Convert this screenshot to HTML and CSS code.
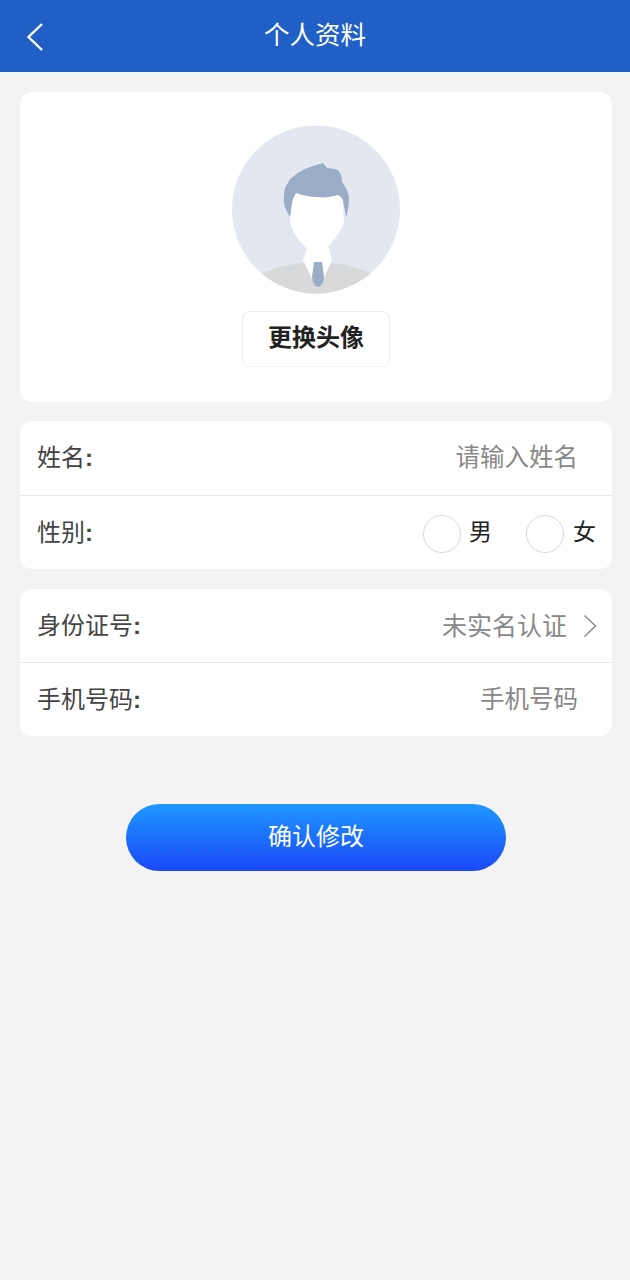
FILE: index.html
```html
<!DOCTYPE html>
<html lang="zh-CN">
<head>
    <meta charset="UTF-8">
    <meta name="viewport" content="width=device-width, initial-scale=1.0">
    <title>个人资料</title>
    <link rel="stylesheet" href="styles.css">
</head>
<body>
    <header class="top-bar">
        <svg class="back-icon" width="18" height="30" viewBox="0 0 18 30">
            <path d="M16 2 L2.5 15 L16 28" fill="none" stroke="#fff" stroke-width="2.4"/>
        </svg>
        <h1>个人资料</h1>
    </header>
    <main>
        <section class="card avatar-card">
            <svg class="avatar" width="168" height="169" viewBox="0 0 168 169">
                <defs>
                    <clipPath id="avatar-clip"><circle cx="84" cy="84.5" r="84"/></clipPath>
                </defs>
                <circle cx="84" cy="84.5" r="84" fill="#e3e8f0"/>
                <g clip-path="url(#avatar-clip)" class="avatar-figure">
                    <ellipse cx="85" cy="175" rx="75" ry="38" fill="#d8d9da"/>
                    <path d="M71 135 L76 120 L96 120 L100 135 L89 160 L83 160 Z" fill="#fff"/>
                    <path d="M82 137 L90 137 L92 152 C92 157 89 162 86 162 C83 162 80 157 80 152 Z" fill="#9badc6"/>
                    <path d="M60 68 L110 68 L112 97 C110 104 105 111 100 117 L93 126 L78 126 L68 117 C63 111 60 104 58 97 Z" fill="#fff"/>
                    <path d="M58 92 C53 84 51 78 52 73 C52 66 53 61 56 58 C57 55 59 53 61 52 C66 47 72 44 78 42 C82 41 87 39 91 38 L95 43 C99 43 103 44 106 45 C109 48 110 52 110 57 C114 62 116 67 117 72 C117 79 116 86 114 92 C113 86 112 80 111 75 C109 72 108 71 106 70 C99 72 92 73 85 72 C77 72 70 70 64 68 C62 71 61 74 60 78 C59 83 59 87 58 92 Z" fill="#9badc6"/>
                </g>
            </svg>
            <button class="change-btn" type="button">更换头像</button>
        </section>

        <section class="card">
            <div class="row row-split row-first">
                <span class="label">姓名<span class="colon">:</span></span>
                <span class="value">请输入姓名</span>
            </div>
            <div class="row">
                <span class="label">性别<span class="colon">:</span></span>
                <div class="gender">
                    <span class="radio"></span><span class="radio-text">男</span>
                    <span class="radio radio-second"></span><span class="radio-text">女</span>
                </div>
            </div>
        </section>

        <section class="card">
            <div class="row row-split">
                <span class="label">身份证号<span class="colon">:</span></span>
                <span class="value value-link">未实名认证</span>
                <svg class="arrow-icon" width="14" height="24" viewBox="0 0 14 24">
                    <path d="M1.5 1.5 L12.5 12 L1.5 22.5" fill="none" stroke="#8f8f8f" stroke-width="1.6"/>
                </svg>
            </div>
            <div class="row">
                <span class="label">手机号码<span class="colon">:</span></span>
                <span class="value">手机号码</span>
            </div>
        </section>

        <button class="confirm-btn" type="button">确认修改</button>
    </main>
</body>
</html>
```

FILE: styles.css
```css
/* Global styles */
body {
    font-family: "Liberation Sans", "Noto Sans CJK SC", sans-serif;
    margin: 0;
    padding: 0;
    background: #f3f3f4;
    color: #333;
}

/* Header */
.top-bar {
    height: 72px;
    background: #205fc6;
    display: flex;
    align-items: center;
    justify-content: center;
    position: relative;
}

.top-bar h1 {
    margin: 0 0 8px;
    font-size: 25.5px;
    font-weight: 400;
    color: #fff;
}

.back-icon {
    position: absolute;
    left: 26px;
    top: 22px;
}

/* Cards */
main {
    padding: 20px 18px 0 20px;
}

.card {
    background: #fff;
    border-radius: 12px;
    margin-bottom: 20px;
}

.avatar-card {
    height: 310px;
    margin-bottom: 19px;
    box-sizing: border-box;
    padding-top: 33px;
    display: flex;
    flex-direction: column;
    align-items: center;
}

.avatar-figure {
    filter: blur(0.5px);
}

.change-btn {
    margin-top: 17px;
    width: 148px;
    height: 56px;
    padding: 0 0 8px;
    background: #fff;
    border: 1px solid #ececec;
    border-bottom-color: #f6f6f6;
    border-radius: 8px;
    font-family: inherit;
    font-size: 24px;
    font-weight: 700;
    color: #222;
}

/* Form rows */
.row {
    height: 73px;
    box-sizing: border-box;
    padding: 0 16px 4px 17px;
    display: flex;
    align-items: center;
    justify-content: space-between;
}

.row-split {
    height: 74px;
    border-bottom: 1px solid #e9e9e9;
}

.row-first {
    height: 75px;
    padding-bottom: 6px;
}

.label {
    font-size: 24px;
    color: #444;
}

.colon {
    font-weight: 700;
}

.value {
    font-size: 24.5px;
    color: #888;
    margin-right: 18px;
    margin-left: auto;
}

.value-link {
    font-size: 25px;
    margin-right: 16px;
}

.arrow-icon {
    flex: none;
    margin-top: 4px;
    margin-right: -1px;
}

.gender {
    display: flex;
    align-items: center;
    margin-top: -1px;
}

.radio {
    width: 38px;
    height: 38px;
    margin-top: 7px;
    box-sizing: border-box;
    border: 1px solid #d9d9d9;
    border-radius: 50%;
}

.radio-second {
    margin-left: 34px;
}

.radio-text {
    margin-left: 8px;
    font-size: 23px;
    color: #222;
}

.radio-second + .radio-text {
    margin-left: 9px;
}

/* Confirm button */
.confirm-btn {
    display: block;
    width: 380px;
    height: 67px;
    margin: 68px 0 0 106px;
    padding: 0 0 6px;
    border: none;
    border-radius: 34px;
    background: linear-gradient(180deg, #1f98ff 0%, #1a47f7 100%);
    font-family: inherit;
    font-size: 24px;
    color: #fff;
}
```
